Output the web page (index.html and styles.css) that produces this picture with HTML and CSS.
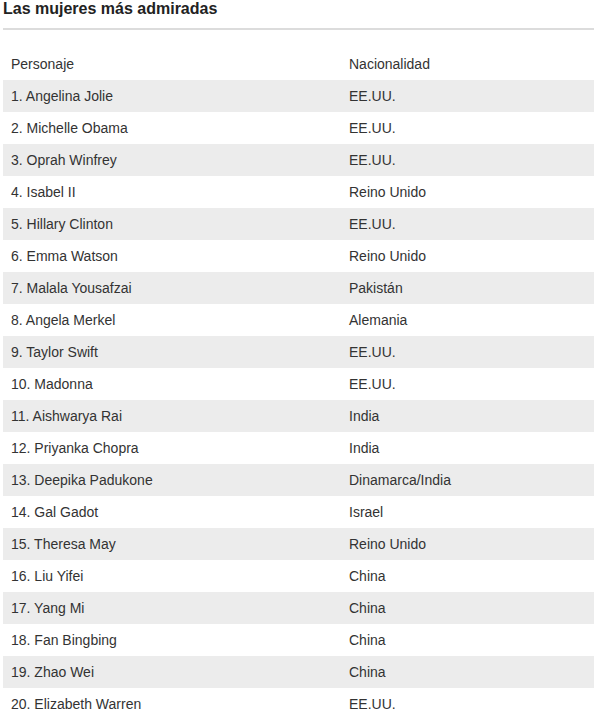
FILE: index.html
```html
<!DOCTYPE html>
<html lang="es">
<head>
<meta charset="utf-8">
<title>Las mujeres más admiradas</title>
<link rel="stylesheet" href="styles.css">
</head>
<body>
<div class="wrap">
  <h2 class="title">Las mujeres más admiradas</h2>
  <table class="list">
    <colgroup><col class="c1"><col class="c2"></colgroup>
    <thead>
      <tr><th>Personaje</th><th>Nacionalidad</th></tr>
    </thead>
    <tbody>
      <tr><td>1. Angelina Jolie</td><td>EE.UU.</td></tr>
      <tr><td>2. Michelle Obama</td><td>EE.UU.</td></tr>
      <tr><td>3. Oprah Winfrey</td><td>EE.UU.</td></tr>
      <tr><td>4. Isabel II</td><td>Reino Unido</td></tr>
      <tr><td>5. Hillary Clinton</td><td>EE.UU.</td></tr>
      <tr><td>6. Emma Watson</td><td>Reino Unido</td></tr>
      <tr><td>7. Malala Yousafzai</td><td>Pakistán</td></tr>
      <tr><td>8. Angela Merkel</td><td>Alemania</td></tr>
      <tr><td>9. Taylor Swift</td><td>EE.UU.</td></tr>
      <tr><td>10. Madonna</td><td>EE.UU.</td></tr>
      <tr><td>11. Aishwarya Rai</td><td>India</td></tr>
      <tr><td>12. Priyanka Chopra</td><td>India</td></tr>
      <tr><td>13. Deepika Padukone</td><td>Dinamarca/India</td></tr>
      <tr><td>14. Gal Gadot</td><td>Israel</td></tr>
      <tr><td>15. Theresa May</td><td>Reino Unido</td></tr>
      <tr><td>16. Liu Yifei</td><td>China</td></tr>
      <tr><td>17. Yang Mi</td><td>China</td></tr>
      <tr><td>18. Fan Bingbing</td><td>China</td></tr>
      <tr><td>19. Zhao Wei</td><td>China</td></tr>
      <tr><td>20. Elizabeth Warren</td><td>EE.UU.</td></tr>
    </tbody>
  </table>
</div>
</body>
</html>
```
FILE: styles.css
```css
html, body {
  margin: 0;
  padding: 0;
  background: #fff;
}
body {
  font-family: "Liberation Sans", Arial, sans-serif;
  color: #333;
}
.wrap {
  padding: 0 15px 0 3px;
}
.title {
  margin: 0;
  font-size: 16px;
  font-weight: bold;
  line-height: 18px;
  color: #222;
  padding-bottom: 10px;
  border-bottom: 2px solid #dcdcdc;
}
.list {
  width: 100%;
  table-layout: fixed;
  border-collapse: collapse;
  margin-top: 18px;
  font-size: 14px;
}
.list col.c1 {
  width: 338px;
}
.list th, .list td {
  text-align: left;
  font-weight: normal;
  padding: 0 8px;
  height: 32px;
  line-height: 16px;
  vertical-align: middle;
}
.list tbody tr:nth-child(odd) {
  background: #ececec;
}
```
